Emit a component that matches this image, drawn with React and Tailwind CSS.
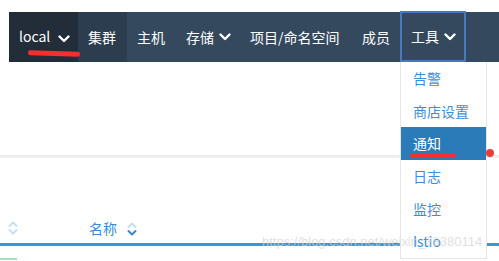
import React from "react";

const Chevron = ({ className = "" }) => (
  <svg width="12" height="8" viewBox="0 0 12 8" className={className}>
    <path d="M1.5 1.5 L6 6 L10.5 1.5" fill="none" stroke="#ffffff" strokeWidth="2.4" strokeLinecap="round" strokeLinejoin="round" />
  </svg>
);

const Sort = ({ active = false }) => (
  <svg width="10" height="16" viewBox="0 0 10 16">
    <path d="M1.5 6 L5 2.5 L8.5 6" fill="none" stroke="#c6def3" strokeWidth="2" strokeLinecap="round" strokeLinejoin="round" />
    <path d="M1.5 10 L5 13.5 L8.5 10" fill="none" stroke={active ? "#3a86cf" : "#c6def3"} strokeWidth="2" strokeLinecap="round" strokeLinejoin="round" />
  </svg>
);

export default function App() {
  const font = { fontFamily: '"Noto Sans CJK SC", "Noto Sans", sans-serif' };
  const items = ["告警", "商店设置", "通知", "日志", "监控", "Istio"];
  return (
    <div className="relative w-[499px] h-[261px] overflow-hidden bg-white" style={font}>
      <div className="flex flex-col">
        <div className="h-[12px]" />
        <nav className="ml-[9px] h-[50px] flex items-stretch bg-[#34495e] text-white text-[14px]">
          <div className="w-[69px] bg-[#222d39] flex items-center pl-[10px] gap-[8px]">
            <span className="leading-none pb-[3px]">local</span>
            <Chevron className="mt-[3px]" />
          </div>
          <div className="w-[49px] bg-[#2c3d4f] flex items-center pl-[10px]">
            <span>集群</span>
          </div>
          <div className="w-[49px] flex items-center pl-[10px]">主机</div>
          <div className="w-[65px] flex items-center pl-[10px] gap-[5px]">
            <span>存储</span>
            <Chevron />
          </div>
          <div className="w-[110px] flex items-center pl-[9px]">项目/命名空间</div>
          <div className="w-[49px] flex items-center pl-[11px]">成员</div>
          <div className="w-[66px] -mt-[1px] border-[2px] border-[#4a78bf] flex items-center pl-[9px] gap-[5px]">
            <span>工具</span>
            <Chevron />
          </div>
          <div className="flex-1" />
        </nav>
        <div className="h-[93px]" />
        <div className="h-[3px] bg-[#eeeeee]" />
        <div className="h-[58px]" />
        <div className="h-[27px] flex items-center pb-[3px] text-[14px] text-[#3a8bd6]">
          <div className="ml-[8px]"><Sort /></div>
          <span className="ml-[71px]">名称</span>
          <div className="ml-[10px] mt-[2px]"><Sort active /></div>
        </div>
        <div className="h-[3px] bg-[#3498db]" />
        <div className="h-[12px]" />
        <div className="w-[17px] h-[2px] bg-[#a4dfc0]" />
      </div>

      <div className="absolute left-[400px] top-[62px] w-[87px] h-[197px] bg-white border border-[#e6e6e6] border-t-0 flex flex-col text-[14px]">
        {items.map((t) => (
          <div
            key={t}
            className={
              "h-[33px] flex items-center pl-[12px] " +
              (t === "通知" ? "bg-[#2b7bb9] text-white" : "text-[#3d8ed8]")
            }
          >
            {t}
          </div>
        ))}
      </div>

      <div className="absolute left-[28px] top-[51px] w-[52px] h-[5px] rounded-full bg-[#f23030] rotate-[2deg]" />
      <div className="absolute left-[410px] top-[153px] w-[46px] h-[5px] rounded-full bg-[#f23030]" />
      <div className="absolute left-[486px] top-[149px] w-[8px] h-[8px] rounded-full bg-[#f23a3a]" />

      <div
        className="absolute left-[262px] top-[232px] text-[13px] text-[#d4d4d4] opacity-70 whitespace-nowrap"
        style={{ fontFamily: '"Liberation Sans", sans-serif' }}
      >
        https://blog.csdn.net/weixin_38380114
      </div>
    </div>
  );
}
